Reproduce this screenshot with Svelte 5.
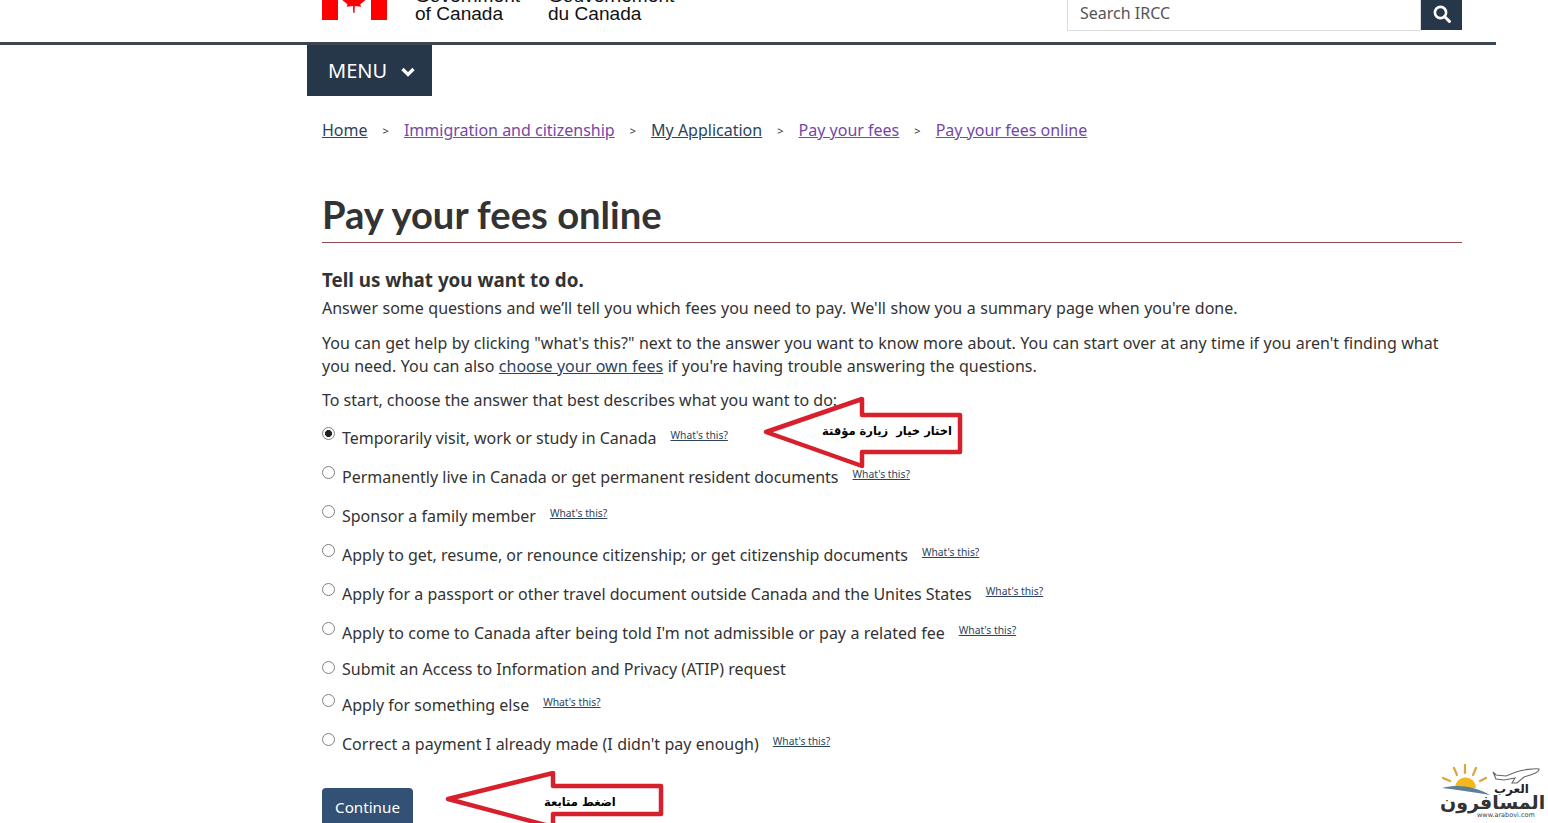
<script>
  const options = [
    { label: 'Temporarily visit, work or study in Canada', help: true, checked: true },
    { label: 'Permanently live in Canada or get permanent resident documents', help: true },
    { label: 'Sponsor a family member', help: true },
    { label: 'Apply to get, resume, or renounce citizenship; or get citizenship documents', help: true },
    { label: 'Apply for a passport or other travel document outside Canada and the Unites States', help: true },
    { label: "Apply to come to Canada after being told I'm not admissible or pay a related fee", help: true },
    { label: 'Submit an Access to Information and Privacy (ATIP) request', help: false },
    { label: 'Apply for something else', help: true },
    { label: "Correct a payment I already made (I didn't pay enough)", help: true }
  ]

  const crumbs = [
    { label: 'Home', visited: false },
    { label: 'Immigration and citizenship', visited: true },
    { label: 'My Application', visited: false },
    { label: 'Pay your fees', visited: true },
    { label: 'Pay your fees online', visited: true }
  ]
</script>

<div class="page">
  <header class="top">
    <div class="brand">
      <svg class="flag" viewBox="0 0 65 40" aria-hidden="true">
        <rect x="0" y="0" width="16" height="40" fill="#f00" />
        <rect x="49" y="0" width="16" height="40" fill="#f00" />
        <path fill="#f00" d="M32.500 4l-3 5-3-1.500 1.500 8-3.500-3.500-.8 2.300-4.200-.8 1.300 4.500-1.800 1 6.500 5.300-.8 2.500 6.300-.8.200 6.800h1.400l.2-6.800 6.300.8-.8-2.500 6.500-5.300-1.800-1 1.300-4.500-4.200.8-.8-2.300-3.500 3.500 1.500-8-3 1.500z" />
      </svg>
      <div class="wordmark">Government<br />of Canada</div>
      <div class="wordmark">Gouvernement<br />du Canada</div>
    </div>
    <div class="search">
      <div class="search-input">Search IRCC</div>
      <button class="search-btn" aria-label="Search">
        <svg viewBox="0 0 18 18" fill="none" stroke="#fff" aria-hidden="true">
          <circle cx="7.500" cy="7.500" r="5.600" stroke-width="2.600" />
          <path d="M11.500 11.500l4.900 4.900" stroke-width="3" stroke-linecap="round" />
        </svg>
      </button>
    </div>
  </header>
  <div class="rule"></div>

  <main class="main">
    <button class="menu">
      MENU
      <svg viewBox="0 0 14 10" fill="none" stroke="#fff" stroke-width="3.200" aria-hidden="true">
        <path d="M1.500 2l5.500 5.500L12.500 2" />
      </svg>
    </button>

    <div class="content">
      <nav class="crumbs">
        {#each crumbs as c, i}
          {#if i > 0}<span class="sep">&gt;</span>{/if}
          <a href="#top" class:visited={c.visited}>{c.label}</a>
        {/each}
      </nav>

      <h1>Pay your fees online</h1>

      <h2>Tell us what you want to do.</h2>
      <p class="intro">Answer some questions and we’ll tell you which fees you need to pay. We'll show you a summary page when you're done.</p>
      <p>You can get help by clicking "what's this?" next to the answer you want to know more about. You can start over at any time if you aren't finding what you need. You can also <a href="#top">choose your own fees</a> if you're having trouble answering the questions.</p>
      <p class="start">To start, choose the answer that best describes what you want to do:</p>

      <div class="options">
        {#each options as o}
          <div class="option" class:plain={!o.help}>
            <input type="radio" name="want" checked={o.checked} />
            <span class="label" class:apos={o.label.includes("'")}>{o.label}</span>
            {#if o.help}<a class="help" href="#top">What's this?</a>{/if}
          </div>
        {/each}
      </div>

      <button class="continue">Continue</button>
    </div>
  </main>

  <!-- annotations drawn over the screenshot -->
  <svg class="arrow arrow-one" viewBox="0 0 200 76" aria-hidden="true">
    <path d="M3 36L99 3V19H197V56H99V70Z" fill="#fff" stroke="#d8202c" stroke-width="4.500" stroke-linejoin="round" />
  </svg>
  <span class="note note-one" dir="rtl">اختار خيار  زيارة مؤقتة</span>

  <svg class="arrow arrow-two" viewBox="0 0 220 58" aria-hidden="true">
    <path d="M3 28L108 2V15H216V43H108V56Z" fill="#fff" stroke="#d8202c" stroke-width="4.500" stroke-linejoin="round" />
  </svg>
  <span class="note note-two" dir="rtl">اضغط متابعة</span>

  <div class="logo" aria-hidden="true">
    <svg viewBox="0 0 110 56">
      <g stroke="#d9a63a" stroke-width="2.200" stroke-linecap="round">
        <path d="M16 17l-7-3M23 11l-3-7M31 9V1M39 11l3-7M46 17l6-3" />
      </g>
      <path d="M21 24a10.500 10.500 0 0 1 21 0z" fill="#f5b81c" />
      <path d="M8 24c16-4 32-2 48 7-16-3-32-5-48-7z" fill="#5e7f96" />
      <path d="M59 8l3 3 10 1 10-4c6-2 19-4 23-3 1 3-6 5-15 8l-7 6-5 0 3-5-11 2-8-1z" fill="#fff" stroke="#666" stroke-width="1.100" />
    </svg>
    <span class="logo-small" dir="rtl">العرب</span>
    <span class="logo-big" dir="rtl">المسافرون</span>
    <span class="logo-url">www.arabovi.com</span>
  </div>
</div>

<style>
  :global(body) {
    margin: 0;
    background: #fff;
    overflow: hidden;
  }

  .page {
    position: relative;
    height: 823px;
    width: 1548px;
    overflow: hidden;
    font-family: "Noto Sans", sans-serif;
    font-size: 16px;
    line-height: 23px;
    color: #333;
  }

  .top {
    display: flex;
    justify-content: space-between;
    align-items: flex-end;
    height: 42px;
    width: 1140px;
    margin-left: 322px;
  }

  .brand {
    display: flex;
    align-items: flex-end;
    height: 42px;
    padding-bottom: 22px;
    box-sizing: border-box;
  }

  .flag {
    width: 65px;
    height: 40px;
    flex: none;
    margin-right: 28px;
  }

  .wordmark {
    font-family: "Liberation Sans", Arial, sans-serif;
    font-size: 19.100px;
    line-height: 18px;
    color: #111;
    width: 133px;
    margin-bottom: -3px;
  }

  .search {
    display: flex;
    align-items: stretch;
    width: 395px;
    height: 31px;
    align-self: flex-start;
  }

  .search-input {
    flex: 1;
    padding-left: 12px;
    color: #555;
    border: 1px solid #ddd;
    border-top: none;
    line-height: 27px;
    height: 31px;
    box-sizing: border-box;
    font-size: 16px;
  }

  .search-btn {
    width: 41px;
    height: 30px;
    padding: 0 0 2px;
    border: none;
    background: #26374a;
    display: flex;
    align-items: center;
    justify-content: center;
  }

  .search-btn svg {
    width: 18px;
    height: 18px;
  }

  .rule {
    width: 1496px;
    height: 3px;
    background: #3b4651;
  }

  .main {
    margin-left: 307px;
    width: 1170px;
  }

  .menu {
    display: flex;
    align-items: center;
    gap: 14px;
    width: 125px;
    height: 51px;
    padding: 0 0 0 21px;
    border: none;
    background: #26374a;
    color: #fff;
    font: 20px "Noto Sans", sans-serif;
  }

  .menu svg {
    width: 14px;
    height: 10px;
    margin-top: 2px;
  }

  .content {
    padding: 0 15px;
  }

  .crumbs {
    display: flex;
    align-items: center;
    margin-top: 23px;
    height: 23px;
  }

  .sep {
    font-size: 11px;
    width: 36.400px;
    text-align: center;
    color: #333;
  }

  a {
    color: #2b4460;
    text-decoration: underline;
  }

  a.visited {
    color: #7448a6;
  }

  h1 {
    margin: 50px 0 0;
    font-family: Lato, sans-serif;
    font-size: 38.200px;
    font-weight: 700;
    line-height: 45px;
    padding-bottom: 5px;
    border-bottom: 1px solid #8c4a4a;
    color: #333;
  }

  h2 {
    margin: 24px 0 0;
    font-size: 18.800px;
    font-weight: 700;
    line-height: 26px;
  }

  p {
    margin: 0 0 11px;
    word-spacing: 0.290px;
  }

  .intro {
    margin: 4px 0 12px;
    word-spacing: 0.370px;
  }

  .start {
    margin-bottom: 0;
    word-spacing: 0;
  }

  .options {
    margin-top: 11px;
  }

  .option {
    display: flex;
    align-items: flex-start;
    height: 39px;
  }

  .option.plain {
    height: 33px;
  }

  .option input {
    appearance: none;
    box-sizing: border-box;
    margin: 4px 7px 0 0;
    width: 13px;
    height: 13px;
    flex: none;
    border: 1px solid #808080;
    border-radius: 50%;
    background: #fff;
  }

  .option input:checked {
    background: radial-gradient(circle, #222 0 3.200px, #fff 3.800px);
  }

  .label {
    margin-top: 4px;
    min-width: fit-content;
  }

  .label.apos {
    word-spacing: 0.200px;
  }

  .plain .label {
    margin-top: 1px;
  }

  .help {
    font-size: 10.300px;
    line-height: 14px;
    margin: 5px 0 0 14px;
  }

  .continue {
    display: block;
    margin-top: 20px;
    width: 91px;
    height: 40px;
    padding: 0 0 3px;
    border: none;
    border-radius: 4px;
    background: #335075;
    color: #fff;
    font: 15.200px "Noto Sans", sans-serif;
  }

  .arrow {
    position: absolute;
  }

  .arrow-one {
    left: 763px;
    top: 396px;
    width: 200px;
    height: 76px;
  }

  .arrow-two {
    left: 445px;
    top: 771px;
    width: 220px;
    height: 58px;
  }

  .note {
    position: absolute;
    font-family: "DejaVu Sans", sans-serif;
    font-weight: 700;
    font-size: 11.500px;
    line-height: 14px;
    color: #000;
    white-space: pre;
  }

  .note-one {
    left: 822px;
    top: 424px;
  }

  .note-two {
    left: 544px;
    top: 795px;
  }

  .logo {
    position: absolute;
    left: 1434px;
    top: 764px;
    width: 110px;
    height: 56px;
  }

  .logo svg {
    position: absolute;
    inset: 0;
    width: 110px;
    height: 56px;
  }

  .logo-small {
    position: absolute;
    left: 60px;
    top: 18px;
    font: 700 12px/14px "DejaVu Sans", sans-serif;
    color: #222;
  }

  .logo-big {
    position: absolute;
    left: 6px;
    top: 25px;
    font: 700 19px/26px "DejaVu Sans", sans-serif;
    color: #333;
    white-space: nowrap;
    text-shadow: 0 0 2px #fff;
  }

  .logo-url {
    position: absolute;
    left: 43px;
    top: 47px;
    font: 6.500px/8px "DejaVu Sans", sans-serif;
    color: #444;
    white-space: nowrap;
  }
</style>
